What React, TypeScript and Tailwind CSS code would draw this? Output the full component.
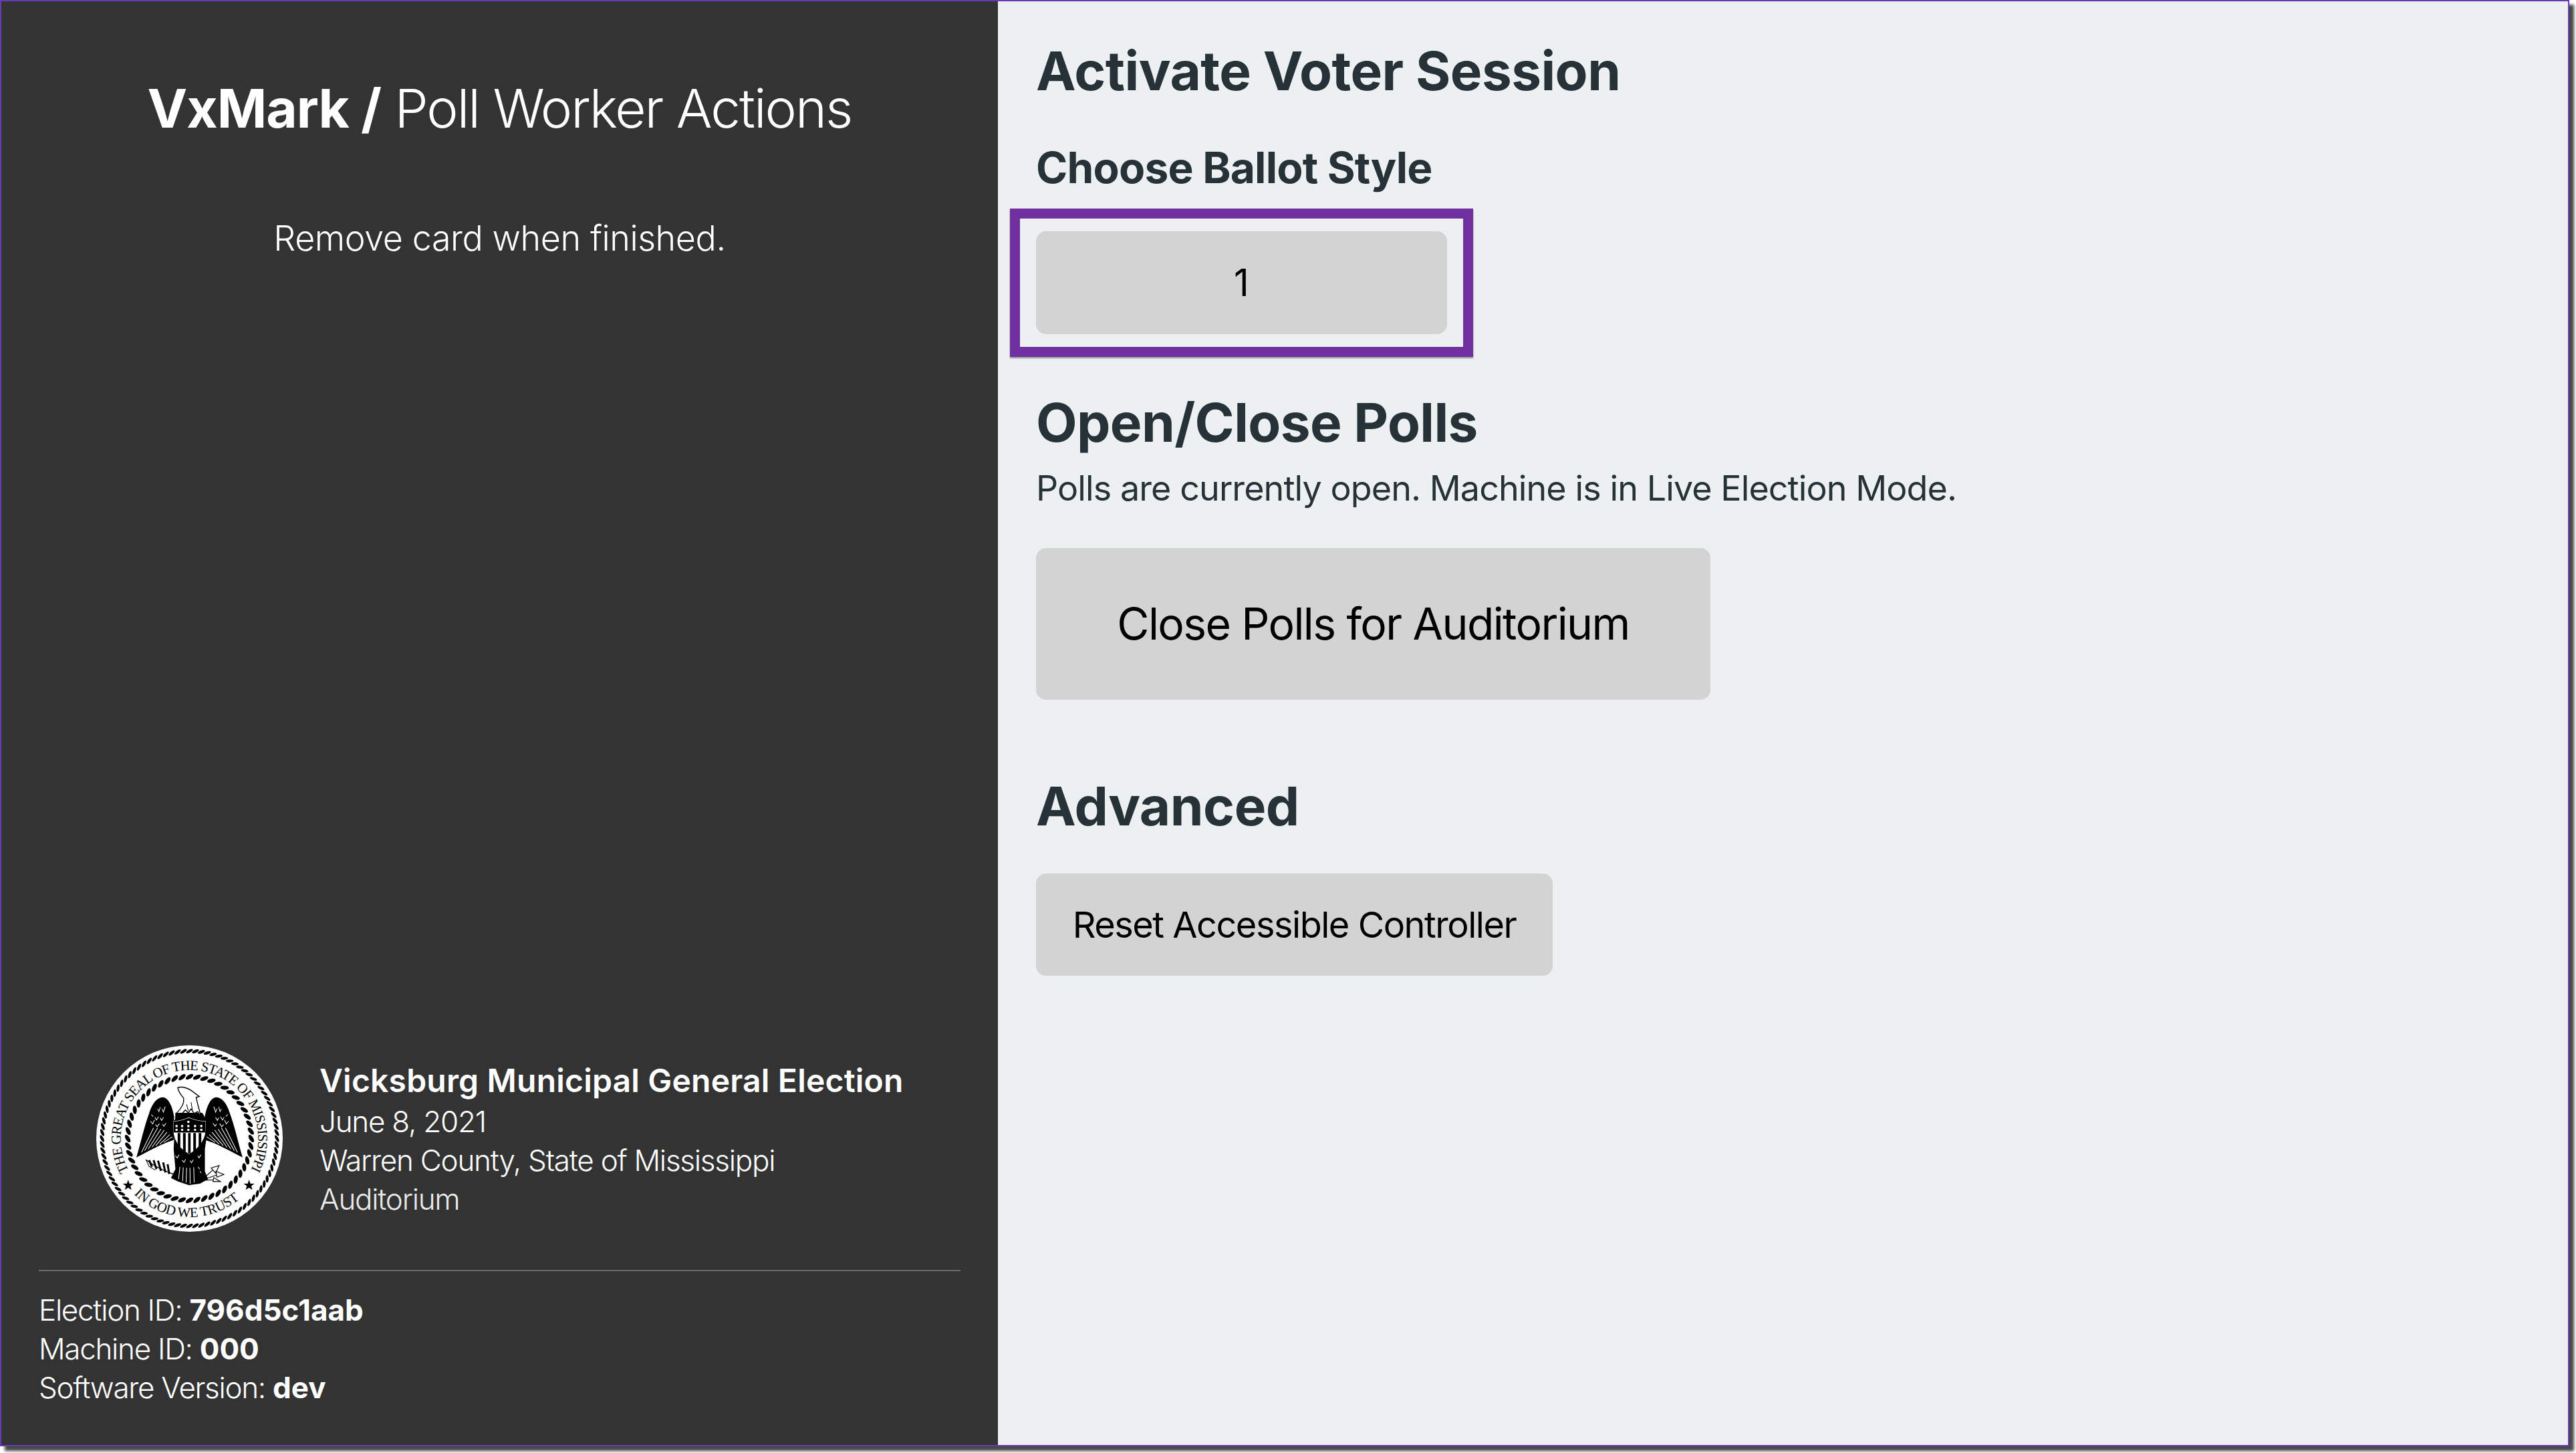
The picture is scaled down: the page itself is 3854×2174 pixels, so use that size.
const rope = (count: number, r: number, rx: number, ry: number, tilt: number) =>
  Array.from({ length: count }, (_, i) => {
    const deg = (i * 360) / count;
    const rad = (deg * Math.PI) / 180;
    const x = 553 + r * Math.cos(rad);
    const y = 553 + r * Math.sin(rad);
    return <ellipse key={i} cx={x} cy={y} rx={rx} ry={ry} fill="#000" transform={`rotate(${deg + tilt} ${x} ${y})`} />;
  });

function Wing() {
  return (
    <g>
      <path d="M315 638C335 570 350 500 372 440C385 395 410 366 435 368C460 372 476 410 484 455L482 560C430 575 370 610 315 638Z" fill="#000" />
      <g stroke="#fff" strokeWidth="3" fill="none">
        <path d="M338 615L392 505M352 608L410 505M368 600L425 510M385 592L440 515M402 585L452 525M420 578L465 535M438 570L476 545" />
        <path d="M378 475L388 487L396 470M398 458L405 470L414 455M422 460L428 472L436 458M382 445L390 455M410 420L416 432L422 412M430 420L436 435L444 410" />
        <path d="M400 490L408 500L418 486M432 488L438 498L448 484" />
      </g>
    </g>
  );
}

function Seal() {
  const stars = [
    [495, 497], [520, 497], [548, 478], [548, 497], [578, 497], [606, 497],
    [520, 514], [548, 514], [578, 514], [495, 514], [606, 514],
  ];
  return (
    <svg viewBox="135 135 836 836" className="w-[279px] h-[279px] shrink-0">
      <defs>
        <path id="seal-top" d="M281 698A308 308 0 1 1 825 698" />
        <path id="seal-bottom" d="M304 802A352 352 0 0 0 802 802" />
      </defs>
      <circle cx="553" cy="553" r="418" fill="#fff" />
      {rope(92, 392, 17, 6.5, 62)}
      {rope(52, 277, 19, 9, 58)}
      <text fontFamily="Liberation Serif, serif" fontSize="62" fill="#000">
        <textPath href="#seal-top" textLength="1262" lengthAdjust="spacing">THE GREAT SEAL OF THE STATE OF MISSISSIPPI</textPath>
      </text>
      <text fontFamily="Liberation Serif, serif" fontSize="62" fill="#000">
        <textPath href="#seal-bottom" textLength="520" lengthAdjust="spacing">IN GOD WE TRUST</textPath>
      </text>
      <path d="M278 738L284 755L302 755L288 766L293 783L278 773L263 783L268 766L254 755L272 755Z" fill="#000" />
      <path d="M820 738L826 755L844 755L830 766L835 783L820 773L805 783L810 766L796 755L814 755Z" fill="#000" />

      <Wing />
      <g transform="translate(1106 0) scale(-1 1)"><Wing /></g>

      {/* body */}
      <path d="M490 438L610 438L630 470L628 560L622 600L622 700L636 735L600 755L550 762L500 745L470 730L490 690L482 600Z" fill="#000" />
      <g stroke="#fff" strokeWidth="3" fill="none">
        <path d="M510 680L504 735M525 682L522 745M540 684L538 750M555 684L556 755M572 682L574 750" />
        <path d="M490 630L498 640L506 626M520 650L528 660L536 646M556 652L562 662L570 648M590 630L596 640L604 626M592 680L598 690M600 700L606 708" />
      </g>
      {/* head */}
      <path d="M500 325C520 318 540 325 560 337L597 365L583 368C588 395 596 420 606 462L590 432L574 440L560 420L548 438L535 425L520 440L494 440C515 420 530 395 527 372C516 360 505 345 500 325Z" fill="#fff" stroke="#000" strokeWidth="4" />
      <path d="M540 400L548 430M560 390L566 425" stroke="#000" strokeWidth="3" />
      {/* shield */}
      <path d="M478 472C505 472 530 465 550 455C570 465 600 472 628 472C632 530 625 580 552 625C480 585 474 530 478 472Z" fill="#fff" stroke="#000" strokeWidth="4" />
      <path d="M481 476C505 476 530 469 550 460C570 469 600 476 625 476L625 526L481 526Z" fill="#000" />
      {stars.map(([x, y], i) => <circle key={i} cx={x} cy={y} r="5.5" fill="#fff" />)}
      <path d="M500 528L500 585L512 597L512 528ZM524 528L524 605L536 614L536 528ZM547 528L547 620L558 620L558 528ZM570 528L570 612L582 604L582 528ZM594 528L594 596L606 584L606 528Z" fill="#000" />
      {/* palm branch */}
      <g stroke="#000" fill="none" strokeWidth="4">
        <path d="M358 648C400 680 440 700 490 715" />
        <path d="M372 650L385 680M392 650L405 690M412 652L425 698M435 660L445 705M455 668L462 712" strokeWidth="9" />
        <path d="M358 648L372 678L400 695" strokeWidth="3" />
      </g>
      {/* arrows */}
      <g stroke="#000" fill="#fff" strokeWidth="3.5">
        <path d="M612 735L660 692M612 738L680 715M612 740L668 738" fill="none" />
        <path d="M650 685L686 674L670 708Z" />
        <path d="M672 700L707 714L676 726Z" />
        <path d="M662 728L692 746L658 746Z" />
      </g>
    </svg>
  );
}

export default function App() {
  return (
    <div className="w-[3854px] h-[2174px] bg-white [font-family:Inter,sans-serif]">
      <div className="w-[3844px] h-[2164px] flex border-2 border-[#6a3ab2] shadow-[7px_7px_4px_rgba(0,0,0,0.72)]">
        {/* side panel */}
        <aside className="w-[1491px] shrink-0 h-full flex flex-col bg-[#333333] text-white">
          <div className="flex-1 flex flex-col items-center pt-[110px]">
            <h1 className="text-[80px] leading-[100px] font-light tracking-[-2px]">
              <b className="font-bold tracking-[-1px]">VxMark /</b> Poll Worker Actions
            </h1>
            <p className="mt-[105px] text-[52px] leading-[80px] font-light tracking-[-0.4px]">Remove card when finished.</p>
          </div>
          <div className="flex items-center gap-[55px] pl-[142px]">
            <Seal />
            <div className="text-[44px] leading-[58px] font-light tracking-[-1.25px]">
              <div className="text-[48px] leading-[64px] font-semibold tracking-[0.2px]">Vicksburg Municipal General Election</div>
              <div>June 8, 2021</div>
              <div>Warren County, State of Mississippi</div>
              <div className="opacity-90">Auditorium</div>
            </div>
          </div>
          <div className="mt-[57px] mx-[56px] mb-[57px] border-t-2 border-[#6b6b6b] pt-[29px] text-[44px] leading-[58px] font-light tracking-[-1.3px]">
            <div>Election ID: <b className="font-bold tracking-normal">796d5c1aab</b></div>
            <div>Machine ID: <b className="font-bold tracking-normal">000</b></div>
            <div>Software Version: <b className="font-bold tracking-normal">dev</b></div>
          </div>
        </aside>

        {/* main content */}
        <main className="flex-1 h-full bg-[#ecf0f1] pl-[57px] pt-[54px] text-[#263238]">
          <h1 className="text-[80px] leading-[100px] font-bold tracking-[-0.55px]">Activate Voter Session</h1>
          <h2 className="mt-[55px] text-[64px] leading-[80px] font-bold tracking-[-0.8px]">Choose Ballot Style</h2>
          <div className="mt-[21px] -ml-[39px] w-[693px] h-[222px] border-[15px] border-[#7030a0] shadow-[0_2px_2px_rgba(0,0,0,0.4)] flex items-center pl-[24px]">
            <button className="w-[615px] h-[154px] rounded-[15px] bg-[#d3d3d3] text-black text-[56px]">1</button>
          </div>
          <h1 className="mt-[48px] text-[80px] leading-[100px] font-bold tracking-[-0.6px]">Open/Close Polls</h1>
          <p className="mt-[10px] text-[52px] leading-[78px] tracking-[-0.9px]">Polls are currently open. Machine is in Live Election Mode.</p>
          <button className="mt-[50px] block w-[1009px] h-[227px] rounded-[15px] bg-[#d3d3d3] text-black text-[66px] tracking-[-1.6px]">Close Polls for Auditorium</button>
          <h1 className="mt-[109px] text-[80px] leading-[100px] font-bold tracking-[-0.5px]">Advanced</h1>
          <button className="mt-[51px] block w-[773px] h-[153px] rounded-[15px] bg-[#d3d3d3] text-black text-[54px] tracking-[-1.45px]">Reset Accessible Controller</button>
        </main>
      </div>
    </div>
  );
}
